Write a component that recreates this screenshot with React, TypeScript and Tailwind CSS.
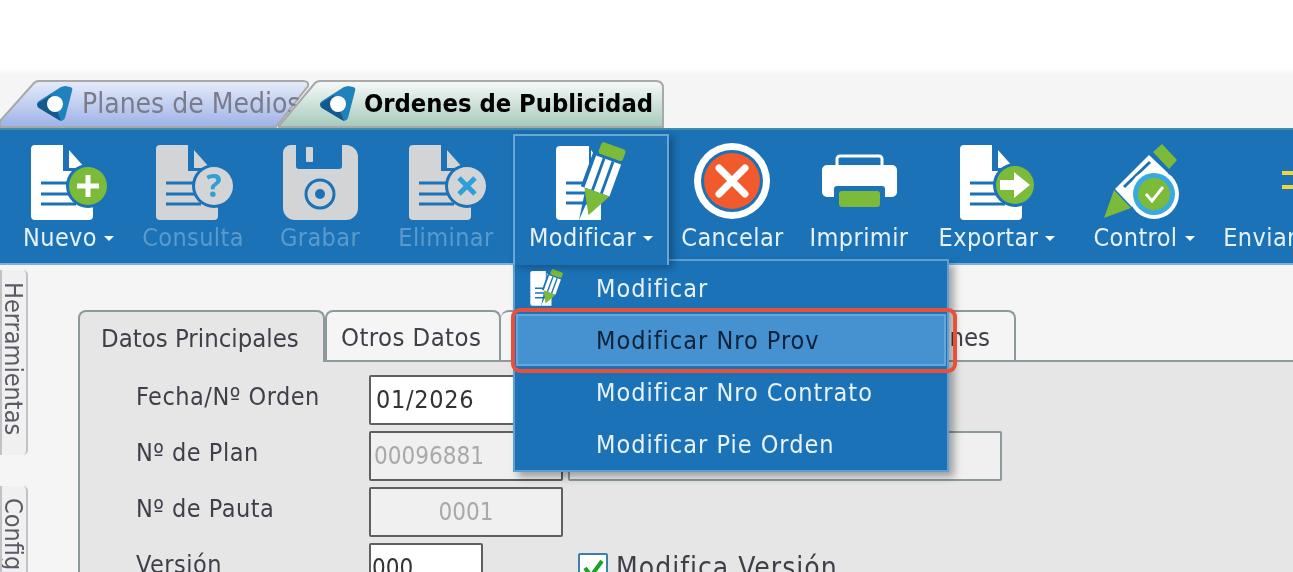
import type { ReactNode } from 'react';

const BLUE = '#1b72b6';
const GREEN = '#7cba3a';
const GRAY = '#d3d4d6';

const PageIcon = ({ fill }: { fill: string }) => (
  <g>
    <path
      d="M10 3H37V29H62V74a4 4 0 0 1-4 4H9a4 4 0 0 1-4-4V7a4 4 0 0 1 4-4Z"
      fill={fill}
    />
    <path d="M43 8 59 26H43Z" fill={fill} />
    <rect x="40" y="29" width="27" height="49" rx="4" fill={fill} />
    <path d="M15 41H46M15 52H46M15 62H50" stroke={BLUE} strokeWidth="3" />
  </g>
);

const NuevoIcon = () => (
  <svg width="85" height="80" viewBox="0 0 85 80">
    <PageIcon fill="#ffffff" />
    <circle cx="62" cy="44" r="22" fill={BLUE} />
    <circle cx="62" cy="44" r="19" fill={GREEN} />
    <path d="M62 33V55M51 44H73" stroke="#ffffff" strokeWidth="5" />
  </svg>
);

const ConsultaIcon = () => (
  <svg width="85" height="80" viewBox="0 0 85 80">
    <PageIcon fill={GRAY} />
    <circle cx="63" cy="44" r="22" fill={BLUE} />
    <circle cx="63" cy="44" r="19" fill={GRAY} />
    <text x="63" y="55" textAnchor="middle" fontSize="32" fontWeight="700" fontFamily="Noto Sans" fill="#2f9fd8">
      ?
    </text>
  </svg>
);

const EliminarIcon = () => (
  <svg width="85" height="80" viewBox="0 0 85 80">
    <PageIcon fill={GRAY} />
    <circle cx="63" cy="44" r="22" fill={BLUE} />
    <circle cx="63" cy="44" r="19" fill={GRAY} />
    <path d="M55 36 71 52M71 36 55 52" stroke="#2f9fd8" strokeWidth="5" />
  </svg>
);

const GrabarIcon = () => (
  <svg width="85" height="80" viewBox="0 0 85 80">
    <path
      d="M13 3H18V24a3 3 0 0 0 3 3H61a3 3 0 0 0 3-3V3H68a12 12 0 0 1 12 12V66a12 12 0 0 1-12 12H17A12 12 0 0 1 5 66V11a8 8 0 0 1 8-8Z"
      fill={GRAY}
    />
    <rect x="28" y="5" width="7" height="15" rx="1" fill={GRAY} />
    <circle cx="42" cy="52" r="14" fill="none" stroke={BLUE} strokeWidth="3" />
    <circle cx="42" cy="52" r="5" fill={BLUE} />
  </svg>
);

const ModificarIcon = ({ size = 85 }: { size?: number }) => (
  <svg width={size} height={(size * 80) / 85} viewBox="0 0 85 80">
    <path d="M11 4H40V30L30 78H11a4 4 0 0 1-4-4V8a4 4 0 0 1 4-4Z" fill="#ffffff" />
    <path d="M52 78H30L38 60H52V74Z" fill="#ffffff" />
    <path d="M42 8 48 16 42 30Z" fill="#ffffff" />
    <path d="M17 41H42M17 51H40M17 61H38" stroke={BLUE} strokeWidth="3" />
    <g transform="translate(63 3) rotate(20) scale(0.95)">
      <path d="M-16 12H19V52H-16Z" fill={BLUE} />
      <rect x="-11" y="0" width="27" height="13" rx="3" fill={GREEN} />
      <path d="M-12 16H16V52H-12Z" fill="#ffffff" />
      <path d="M-3 16V52M7 16V52" stroke={BLUE} strokeWidth="3" />
      <path d="M-12 52H16L2 78Z" fill={GREEN} />
    </g>
  </svg>
);

const CancelarIcon = () => (
  <svg width="85" height="80" viewBox="0 0 85 80">
    <circle cx="42" cy="39" r="38" fill="#ffffff" />
    <circle cx="42" cy="39" r="31" fill={BLUE} />
    <circle cx="42" cy="39" r="28" fill="#f15a2c" />
    <path d="M29 26 55 52M55 26 29 52" stroke="#ffffff" strokeWidth="7" strokeLinecap="round" />
  </svg>
);

const ImprimirIcon = () => (
  <svg width="85" height="80" viewBox="0 0 85 80">
    <path d="M20 23V17a3 3 0 0 1 3-3H62a3 3 0 0 1 3 3V23" fill="none" stroke="#ffffff" strokeWidth="3" />
    <path
      d="M10 23H75a5 5 0 0 1 5 5V50a5 5 0 0 1-5 5H68V47a3 3 0 0 0-3-3H20a3 3 0 0 0-3 3V55H10a5 5 0 0 1-5-5V28a5 5 0 0 1 5-5Z"
      fill="#ffffff"
    />
    <rect x="22" y="49" width="41" height="16" rx="3" fill={GREEN} />
  </svg>
);

const ExportarIcon = () => (
  <svg width="85" height="80" viewBox="0 0 85 80">
    <PageIcon fill="#ffffff" />
    <circle cx="60" cy="43" r="22" fill={BLUE} />
    <circle cx="60" cy="43" r="19" fill={GREEN} />
    <path d="M45 38H59V30L75 43 59 56V48H45Z" fill="#ffffff" />
  </svg>
);

const ControlIcon = () => (
  <svg width="85" height="80" viewBox="0 0 85 80">
    <path d="M60 2 75 18 67 27 51 10Z" fill={GREEN} />
    <path d="M13 47 47 13 66 31 30 65Z" fill="#ffffff" />
    <path d="M22 45 48 20M30 55 56 29" stroke={BLUE} strokeWidth="3" />
    <path d="M12 48 2 76 29 66Z" fill={GREEN} />
    <circle cx="52" cy="52" r="25" fill="#ffffff" />
    <circle cx="52" cy="52" r="21" fill="#3aa9de" />
    <circle cx="52" cy="52" r="16" fill={GREEN} />
    <path d="M44 52 50 59 61 45" fill="none" stroke="#ffffff" strokeWidth="3" />
  </svg>
);

const EnviarIcon = () => (
  <svg width="85" height="80" viewBox="0 0 85 80">
    <path d="M64 31H85M64 45H85M78 21V27M78 50V56" stroke="#f5d33f" strokeWidth="4" />
  </svg>
);

const Caret = () => (
  <span className="ml-[7px] inline-block h-0 w-0 translate-y-[-1px] border-x-[5px] border-t-[5px] border-x-transparent border-t-white align-middle" />
);

type ToolProps = {
  label: string;
  icon: ReactNode;
  width: string;
  caret?: boolean;
  disabled?: boolean;
};

const ToolButton = ({ label, icon, width, caret, disabled }: ToolProps) => (
  <div className={`${width} flex shrink-0 flex-col items-center pt-[12px]`}>
    <div className="h-[80px]">{icon}</div>
    <div
      className={`whitespace-nowrap text-[25px] leading-[32px] tracking-[0.4px] ${
        disabled ? 'text-[#5c9acb]' : 'text-[#e8f2fa]'
      }`}
    >
      {label}
      {caret && <Caret />}
    </div>
  </div>
);

const AppIcon = () => (
  <svg width="40" height="40" viewBox="0 0 40 40" className="shrink-0">
    <path
      d="M30 2 35 3a3 3 0 0 1 2 4L30 34a4 4 0 0 1-6 2L4 24a4 4 0 0 1 0-7L26 3Z"
      fill="#1f82bc"
    />
    <path d="M2 20 16 11 26 37 24 36 4 24Z" fill="#14598c" />
    <circle cx="20" cy="20" r="8" fill="#ffffff" />
  </svg>
);

const Field = ({ className, children }: { className: string; children?: ReactNode }) => (
  <div className={`flex h-[50px] items-center rounded-[2px] border-2 ${className}`}>{children}</div>
);

const FormRow = ({ label, children }: { label: string; children: ReactNode }) => (
  <div className="flex h-[50px] items-center">
    <div className="w-[233px] shrink-0 pb-[7px] text-[25px] tracking-[0.5px] text-[#3f3f4a]">{label}</div>
    {children}
  </div>
);

const MenuItem = ({ label, active }: { label: string; active?: boolean }) => (
  <div
    className={`flex h-[52px] items-center pt-[2px] text-[25px] tracking-[1px] ${
      active
        ? 'mx-[1px] border-2 border-[#63a7dc] bg-[#4691cf] pl-[78px] text-[#0d2238]'
        : 'pl-[81px] text-[#e8f2fa]'
    }`}
  >
    {label}
  </div>
);

export default function App() {
  return (
    <div
      className="relative h-[572px] w-[1293px] overflow-hidden bg-[#f5f5f5] blur-[0.6px]"
      style={{ fontFamily: '"DejaVu Sans Condensed", "DejaVu Sans", sans-serif' }}
    >
      <div className="h-[75px] bg-gradient-to-b from-white from-90% to-[#f5f5f5]" />

      {/* document tabs */}
      <div className="flex h-[53px] items-end">
        <div className="relative flex h-[48px] w-[310px] shrink-0 items-center">
          <svg className="absolute inset-0" width="310" height="48" viewBox="0 0 310 48">
            <defs>
              <linearGradient id="planes" x1="0" y1="0" x2="0" y2="1">
                <stop offset="0" stopColor="#e6ecfa" />
                <stop offset="1" stopColor="#9db2e6" />
              </linearGradient>
            </defs>
            <path
              d="M0 41 34 3Q36 1 39 1H303Q309 1 308 6L276 47H0Z"
              fill="url(#planes)"
              stroke="#a8a8a8"
              strokeWidth="2"
            />
          </svg>
          <div className="relative ml-[35px]">
            <AppIcon />
          </div>
          <span className="relative ml-[7px] whitespace-nowrap text-[28px] text-[#7b7b8c]">Planes de Medios</span>
        </div>
        <div className="relative z-10 -ml-[32px] flex h-[48px] w-[386px] shrink-0 items-center">
          <svg className="absolute inset-0" width="386" height="48" viewBox="0 0 386 48">
            <defs>
              <linearGradient id="ordenes" x1="0" y1="0" x2="0" y2="1">
                <stop offset="0" stopColor="#f7f9f8" />
                <stop offset="1" stopColor="#a6cabb" />
              </linearGradient>
            </defs>
            <path
              d="M0 47 37 3Q39 1 42 1H378Q385 1 385 8V47Z"
              fill="url(#ordenes)"
              stroke="#a8a8a8"
              strokeWidth="2"
            />
          </svg>
          <div className="relative ml-[40px]">
            <AppIcon />
          </div>
          <span className="relative ml-[6px] whitespace-nowrap text-[25.3px] font-bold text-black">
            Ordenes de Publicidad
          </span>
        </div>
      </div>

      {/* toolbar */}
      <div className="flex h-[137px] border-t-2 border-t-[#3d8fb0] border-b-2 border-b-[#7eb2dc] bg-[#1b72b6] pl-[7px]">
        <ToolButton label="Nuevo" width="w-[123px]" icon={<NuevoIcon />} caret />
        <ToolButton label="Consulta" width="w-[126px]" icon={<ConsultaIcon />} disabled />
        <ToolButton label="Grabar" width="w-[128px]" icon={<GrabarIcon />} disabled />
        <ToolButton label="Eliminar" width="w-[124px]" icon={<EliminarIcon />} disabled />
        <div className="relative z-30 ml-[5px] mt-[4px] h-[131px] w-[156px] shrink-0 border-x-2 border-t-2 border-[#6aa6d8] bg-[#1b72b6] shadow-[4px_2px_8px_rgba(0,0,0,0.3)]">
          <ToolButton label="Modificar" width="w-full -mt-[6px]" icon={<ModificarIcon />} caret />
        </div>
        <ToolButton label="Cancelar" width="w-[127px]" icon={<CancelarIcon />} />
        <ToolButton label="Imprimir" width="w-[126px]" icon={<ImprimirIcon />} />
        <ToolButton label="Exportar" width="w-[150px]" icon={<ExportarIcon />} caret />
        <ToolButton label="Control" width="w-[144px]" icon={<ControlIcon />} caret />
        <ToolButton label="Enviar" width="w-[88px]" icon={<EnviarIcon />} />
      </div>

      {/* body */}
      <div className="flex">
        <div className="flex w-[78px] shrink-0 flex-col">
          <div className="mt-[5px] h-[185px] w-[28px] overflow-hidden rounded-r-[5px] border-y-2 border-r-2 border-[#bfc3c5] bg-[#f0f0f0] [writing-mode:vertical-rl]">
            <span className="ml-[-9px] block pt-[12px] text-[25px] leading-[26px] text-[#5a5a66]">Herramientas</span>
          </div>
          <div className="mt-[31px] h-[100px] w-[28px] overflow-hidden rounded-r-[5px] border-y-2 border-r-2 border-[#bfc3c5] bg-[#f0f0f0] [writing-mode:vertical-rl]">
            <span className="ml-[-9px] block pt-[12px] text-[25px] leading-[26px] text-[#5a5a66]">Configuración</span>
          </div>
        </div>

        <div className="min-w-0 flex-1 pt-[45px]">
          <div className="flex h-[52px] items-end border-b-2 border-b-[#8c9a9e] text-[25.5px] text-[#3f3f4a]">
            <div className="relative z-10 -mb-[2px] flex h-[52px] w-[247px] items-center rounded-t-[8px] border-x-2 border-t-2 border-[#8c9a9e] bg-[#e6e6e6] pl-[21px] pt-[2px]">
              Datos Principales
            </div>
            <div className="flex h-[50px] w-[176px] items-center rounded-t-[8px] border-x-2 border-t-2 border-[#8c9a9e] bg-[#f5f5f5] pl-[14px] pt-[2px] tracking-[0.4px]">
              Otros Datos
            </div>
            <div className="flex h-[50px] w-[515px] items-center justify-end rounded-t-[8px] border-r-2 border-t-2 border-[#8c9a9e] bg-[#f5f5f5] pr-[24px] pt-[2px]">
              Observaciones
            </div>
          </div>
          <div className="flex h-[210px] flex-col gap-[6px] border-l-2 border-l-[#8c9a9e] bg-[#e6e6e6] pl-[56px] pt-[13px]">
            <FormRow label="Fecha/Nº Orden">
              <Field className="w-[194px] border-[#5f5f5f] bg-white pl-[5px] text-[25px] tracking-[0.7px] text-[#333]">01/2026</Field>
            </FormRow>
            <FormRow label="Nº de Plan">
              <Field className="w-[194px] border-[#5f5f5f] bg-[#f0f0f0] pl-[3px] text-[24px] text-[#a9a9a9]">00096881</Field>
              <Field className="ml-[5px] w-[434px] border-[#8c9a9e] bg-[#f0f0f0]" />
            </FormRow>
            <FormRow label="Nº de Pauta">
              <Field className="w-[194px] justify-center border-[#5f5f5f] bg-[#f0f0f0] text-[24px] text-[#a9a9a9]">0001</Field>
            </FormRow>
            <FormRow label="Versión">
              <Field className="w-[114px] border-[#5f5f5f] bg-white pl-[1px] text-[24px] text-[#333]">000</Field>
              <div className="ml-[95px] flex items-center gap-[8px] text-[28px] tracking-[1px] text-[#3f3f4a]">
                <span className="flex h-[30px] w-[30px] items-center justify-center rounded-[2px] border-2 border-[#3f7fb0] bg-white">
                  <svg width="24" height="24" viewBox="0 0 24 24">
                    <path d="M4 12 10 20 21 5" fill="none" stroke="#16a324" strokeWidth="4" />
                  </svg>
                </span>
                Modifica Versión
              </div>
            </FormRow>
          </div>
        </div>
      </div>

      {/* open dropdown */}
      <div className="absolute left-[513px] top-[259px] z-20 h-[213px] w-[436px] border-2 border-[#5f9fd4] bg-[#1b72b6] pt-[1px] shadow-[5px_5px_8px_rgba(0,0,0,0.35)]">
        <div className="relative">
          <div className="absolute left-[12px] top-[7px]">
            <ModificarIcon size={40} />
          </div>
          <MenuItem label="Modificar" />
          <MenuItem label="Modificar Nro Prov" active />
          <MenuItem label="Modificar Nro Contrato" />
          <MenuItem label="Modificar Pie Orden" />
        </div>
      </div>
      <div className="absolute left-[511px] top-[308px] z-40 h-[65px] w-[446px] rounded-[9px] border-[4px] border-[#e8503a]" />
    </div>
  );
}
